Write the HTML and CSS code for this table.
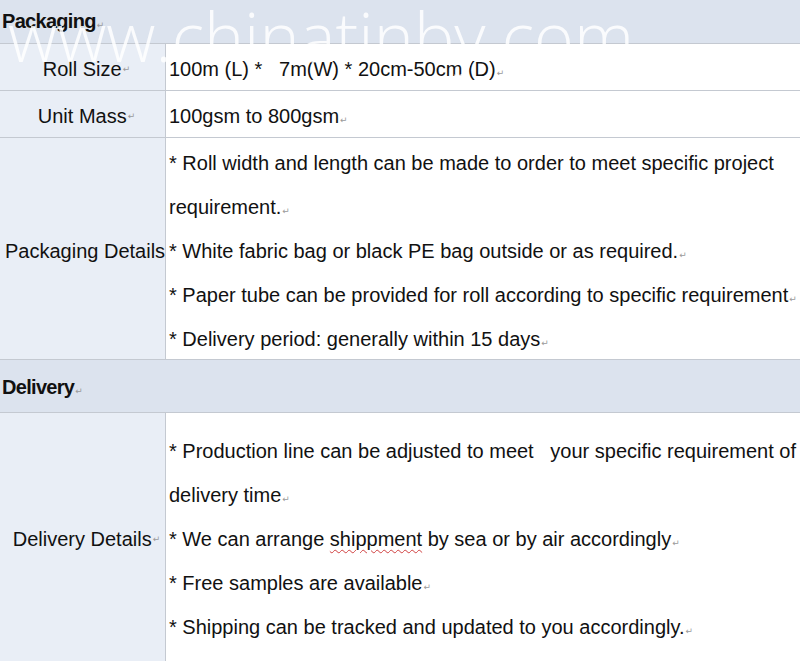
FILE: index.html
```html
<!DOCTYPE html>
<html>
<head>
<meta charset="utf-8">
<link rel="stylesheet" href="styles.css">
</head>
<body>
<div class="sheet">
  <div class="section sec-pack">Packaging<span class="ret">↵</span></div>
  <div class="row short">
    <div class="label">Roll Size<span class="ret">↵</span></div>
    <div class="value"><p>100m (L) * &nbsp;&nbsp;7m(W) * 20cm-50cm (D)<span class="ret">↵</span></p></div>
  </div>
  <div class="row short">
    <div class="label">Unit Mass<span class="ret">↵</span></div>
    <div class="value"><p>100gsm to 800gsm<span class="ret">↵</span></p></div>
  </div>
  <div class="row tall pack">
    <div class="label">Packaging Details</div>
    <div class="value">
      <p>* Roll width and length can be made to order to meet specific project<br>requirement.<span class="ret">↵</span></p>
      <p>* White fabric bag or black PE bag outside or as required.<span class="ret">↵</span></p>
      <p>* Paper tube can be provided for roll according to specific requirement<span class="ret">↵</span></p>
      <p>* Delivery period: generally within 15 days<span class="ret">↵</span></p>
    </div>
  </div>
  <div class="section sec-del">Delivery<span class="ret">↵</span></div>
  <div class="row tall deliv">
    <div class="label">Delivery Details<span class="ret">↵</span></div>
    <div class="value">
      <p>* Production line can be adjusted to meet &nbsp;&nbsp;your specific requirement of<br>delivery time<span class="ret">↵</span></p>
      <p>* We can arrange <span class="typo">shippment</span> by sea or by air accordingly<span class="ret">↵</span></p>
      <p>* Free samples are available<span class="ret">↵</span></p>
      <p>* Shipping can be tracked and updated to you accordingly.<span class="ret">↵</span></p>
    </div>
  </div>
  <div class="watermark">www.chinatinby.com</div>
</div>
</body>
</html>
```

FILE: styles.css
```css
html, body {
  margin: 0;
  padding: 0;
  background: #ffffff;
  overflow: hidden;
}

.sheet {
  position: relative;
  width: 800px;
  height: 661px;
  overflow: hidden;
  font-family: "Liberation Sans", Arial, sans-serif;
  font-size: 20px;
  color: #111111;
}

.section {
  background: #dce3ee;
  border-bottom: 1px solid #c4c9d1;
  font-weight: bold;
  letter-spacing: -0.7px;
  padding-left: 2px;
  white-space: nowrap;
  box-sizing: border-box;
  overflow: hidden;
}

.sec-pack {
  height: 44px;
  line-height: 43px;
}

.sec-del {
  height: 53px;
  line-height: 50px;
  padding-top: 2px;
}

.row {
  display: grid;
  grid-template-columns: 166px 1fr;
  border-bottom: 1px solid #c4c9d1;
  box-sizing: border-box;
  overflow: hidden;
}

.label {
  background: #e9eef6;
  border-right: 1px solid #c4c9d1;
  text-align: center;
  padding-left: 8px;
  white-space: nowrap;
  display: flex;
  align-items: center;
  justify-content: center;
}

.value {
  padding-left: 3px;
  white-space: nowrap;
}

.value p {
  margin: 0;
}

.short {
  height: 47px;
}

.short .label,
.short .value {
  padding-top: 3px;
  line-height: 40px;
}

.short .value {
  display: flex;
  align-items: center;
}

.tall .value p {
  line-height: 44px;
}

.pack {
  height: 222px;
}

.pack .label,
.pack .value {
  padding-top: 3px;
}

.pack .label {
  justify-content: flex-start;
  padding-left: 5px;
}

.deliv {
  height: 252px;
}

.deliv .label,
.deliv .value {
  padding-top: 16px;
  padding-bottom: 16px;
}

.ret {
  font-family: "DejaVu Sans", sans-serif;
  font-weight: normal;
  font-size: 9px;
  line-height: 0;
  color: #9a9a9a;
  letter-spacing: 0;
  margin-left: 1px;
}

.typo {
  text-decoration: underline wavy #d04040;
  text-decoration-thickness: 1px;
  text-underline-offset: 3px;
}

.watermark {
  position: absolute;
  left: 8px;
  top: 2px;
  font-family: "Open Sans", sans-serif;
  font-weight: 300;
  font-size: 68px;
  line-height: 68px;
  color: rgba(255, 255, 255, 0.85);
  white-space: nowrap;
  pointer-events: none;
}
```
